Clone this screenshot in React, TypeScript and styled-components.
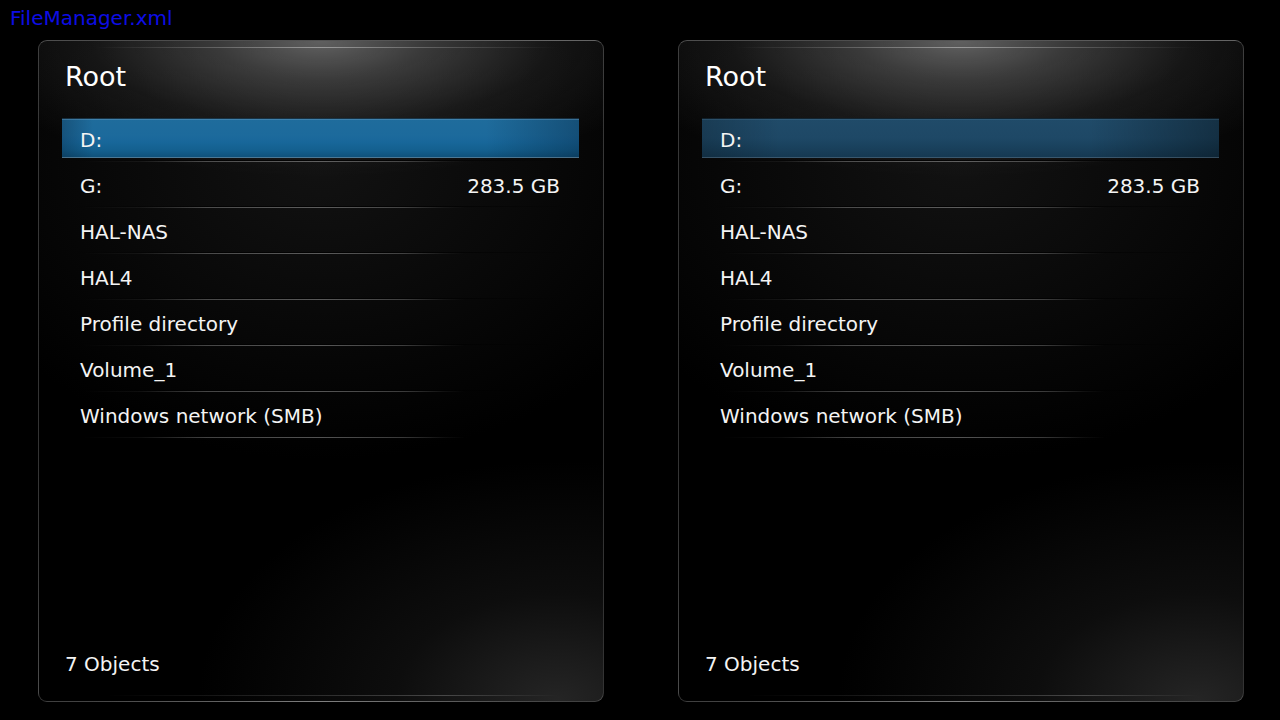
import React from "react";
import styled, { createGlobalStyle, css } from "styled-components";

const Global = createGlobalStyle`
  html, body { margin: 0; padding: 0; background: #000; }
  body { font-family: "DejaVu Sans", "Liberation Sans", sans-serif; color: #fff; }
  * { box-sizing: border-box; }
`;

const Page = styled.div`
  width: 1280px;
  height: 720px;
  background: #000;
  display: flex;
  flex-direction: column;
  overflow: hidden;
`;

const Caption = styled.div`
  height: 40px;
  padding: 7px 10px 0;
  font-size: 20px;
  line-height: 23px;
  color: #0d0de6;
`;

const Panels = styled.div`
  display: flex;
  gap: 74px;
  padding-left: 38px;
`;

const Panel = styled.section`
  width: 566px;
  height: 662px;
  border: 1px solid rgba(255, 255, 255, 0.2);
  border-top-color: rgba(255, 255, 255, 0.3);
  border-radius: 9px;
  padding: 20px 24px 25px 26px;
  display: flex;
  flex-direction: column;
  overflow: hidden;
  background:
    linear-gradient(90deg, transparent 10%, rgba(255,255,255,0.2) 30%, rgba(255,255,255,0.38) 50%, rgba(255,255,255,0.2) 70%, transparent 92%) 0 6px / 100% 1px no-repeat,
    linear-gradient(90deg, transparent 12%, rgba(255,255,255,0.1) 35%, rgba(255,255,255,0.22) 72%, transparent 92%) 0 calc(100% - 5px) / 100% 1px no-repeat,
    radial-gradient(ellipse 370px 135px at 50% 0%, rgba(105,105,105,0.9) 0%, rgba(78,78,78,0.7) 28%, rgba(45,45,45,0.4) 62%, rgba(0,0,0,0) 100%),
    radial-gradient(ellipse 360px 240px at 92% 100%, rgba(46,46,46,0.8) 0%, rgba(26,26,26,0.5) 45%, rgba(0,0,0,0) 100%),
    radial-gradient(ellipse 400px 300px at 50% 18%, rgba(20,20,20,0.9) 0%, rgba(0,0,0,0) 100%),
    #000;
`;

const Heading = styled.h1`
  margin: 0;
  font-size: 27px;
  font-weight: normal;
  line-height: 32px;
  color: #fff;
`;

const List = styled.ul`
  list-style: none;
  margin: 24px 0 0 -3px;
  padding: 0;
`;

const Row = styled.li`
  height: 46px;
  display: flex;
  flex-direction: column;
  padding-top: 1px;
`;

const Bar = styled.div<{ $selected?: "focused" | "unfocused" }>`
  height: 40px;
  display: flex;
  align-items: center;
  justify-content: space-between;
  padding: 4px 19px 0 18px;
  font-size: 20px;
  line-height: 23px;
  color: #f4f4f4;
  ${(p) =>
    p.$selected === "focused" &&
    css`
      background:
        linear-gradient(90deg, rgba(0,10,25,0.25) 0%, rgba(0,0,0,0) 6%, rgba(0,0,0,0) 82%, rgba(0,15,35,0.3) 100%),
        linear-gradient(180deg, #1f6c9c 0%, #1c6a9c 45%, #18679a 60%, #14608f 80%, #0f5079 100%);
      box-shadow: inset 0 1px 0 rgba(0,0,0,0.6), inset 0 2px 0 rgba(120,170,205,0.35), inset 0 -1px 0 rgba(150,170,185,0.45);
    `}
  ${(p) =>
    p.$selected === "unfocused" &&
    css`
      background:
        linear-gradient(90deg, rgba(0,0,0,0.2) 0%, rgba(0,0,0,0) 15%, rgba(0,0,0,0) 75%, rgba(0,0,0,0.35) 100%),
        linear-gradient(180deg, #204b69 0%, #1e4866 50%, #1a425e 70%, #153851 100%);
      box-shadow: inset 0 1px 0 rgba(0,0,0,0.6), inset 0 2px 0 rgba(110,150,180,0.2), inset 0 -1px 0 rgba(130,150,165,0.35);
    `}
`;

const Separator = styled.div`
  margin-top: 2px;
  height: 2px;
  background:
    linear-gradient(90deg, rgba(255,255,255,0) 4%, rgba(255,255,255,0.05) 15%, rgba(255,255,255,0.26) 28%, rgba(255,255,255,0.32) 50%, rgba(255,255,255,0.22) 66%, rgba(255,255,255,0.05) 74%, rgba(255,255,255,0) 78%) 0 1px / 100% 1px no-repeat,
    linear-gradient(90deg, rgba(0,0,0,0) 0%, rgba(0,0,0,0.8) 30%, rgba(0,0,0,0.8) 70%, rgba(0,0,0,0) 100%) 0 0 / 100% 1px no-repeat;
`;

const Size = styled.span`
  color: #f4f4f4;
`;

const Footer = styled.div`
  margin-top: auto;
  font-size: 20px;
  line-height: 23px;
  color: #f4f4f4;
`;

type Item = { name: string; size?: string };

const items: Item[] = [
  { name: "D:" },
  { name: "G:", size: "283.5 GB" },
  { name: "HAL-NAS" },
  { name: "HAL4" },
  { name: "Profile directory" },
  { name: "Volume_1" },
  { name: "Windows network (SMB)" },
];

function FilePanel({ focused }: { focused: boolean }) {
  return (
    <Panel>
      <Heading>Root</Heading>
      <List>
        {items.map((it, i) => (
          <Row key={it.name}>
            <Bar $selected={i === 0 ? (focused ? "focused" : "unfocused") : undefined}>
              <span>{it.name}</span>
              {it.size && <Size>{it.size}</Size>}
            </Bar>
            <Separator />
          </Row>
        ))}
      </List>
      <Footer>7 Objects</Footer>
    </Panel>
  );
}

export default function App() {
  return (
    <Page>
      <Global />
      <Caption>FileManager.xml</Caption>
      <Panels>
        <FilePanel focused />
        <FilePanel focused={false} />
      </Panels>
    </Page>
  );
}
